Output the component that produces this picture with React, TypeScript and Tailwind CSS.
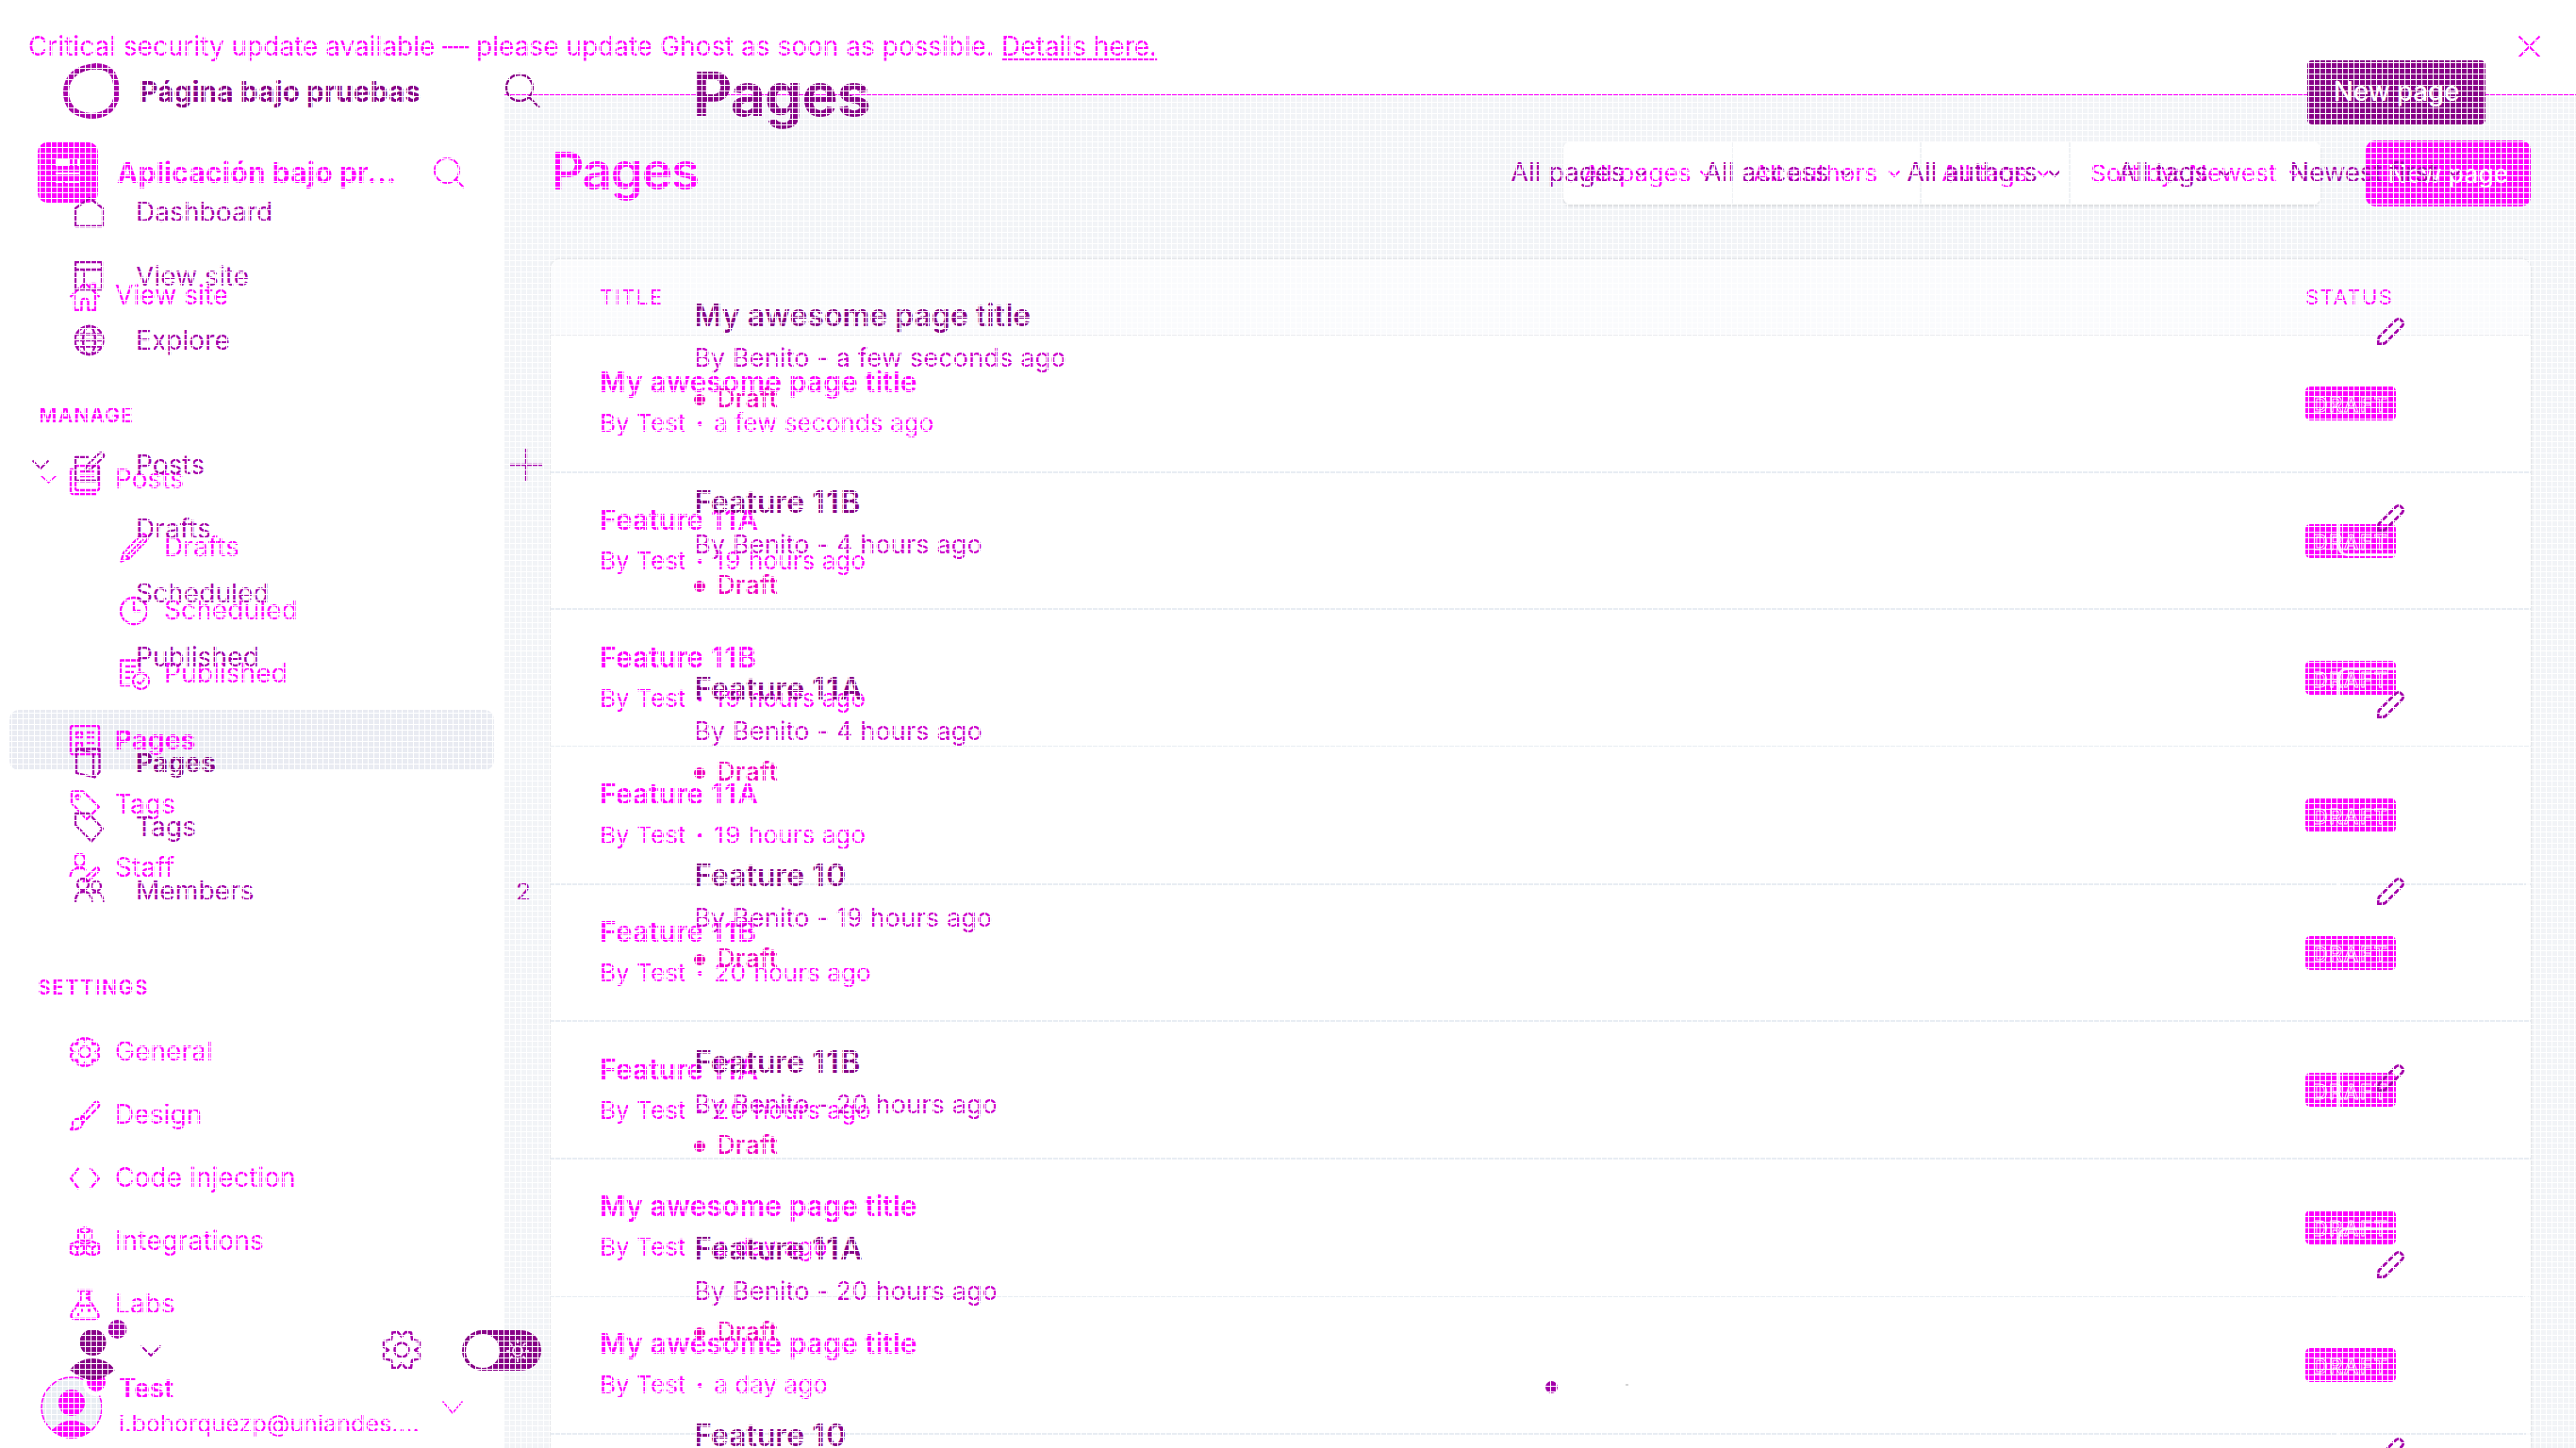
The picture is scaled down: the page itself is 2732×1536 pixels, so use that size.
import React from 'react';

type IconProps = { className?: string; w?: number; h?: number; sw?: number; children: React.ReactNode };

function Icon({ className = '', w = 32, h = 32, sw = 2, children }: IconProps) {
  return (
    <svg
      width={w}
      height={h}
      viewBox={`0 0 ${w} ${h}`}
      fill="none"
      stroke="currentColor"
      strokeWidth={sw}
      strokeLinejoin="round"
      className={`shrink-0 overflow-visible ${className}`}
    >
      {children}
    </svg>
  );
}

function Chevron({ w = 18, h = 9, sw = 2, className = '' }: { w?: number; h?: number; sw?: number; className?: string }) {
  return (
    <Icon w={w} h={h} sw={sw} className={className}>
      <path d={`M0.5 0.5 L${w / 2} ${h - 1} L${w - 0.5} 0.5`} />
    </Icon>
  );
}

/* Spaces digits and shrinks separator bullets inside a label. */
function Label({ text }: { text: string }) {
  return (
    <span className="whitespace-pre">
      {text.split(/(\d+|•)/).map((part, i) =>
        part === '•' ? (
          <span key={i} className="inline-block scale-60">•</span>
        ) : /^\d+$/.test(part) ? (
          <span key={i} className="tracking-[1.4px]">{part}</span>
        ) : (
          part
        ),
      )}
    </span>
  );
}

const search = (
  <>
    <circle cx="14" cy="14" r="13" />
    <path d="M23.5 23.5 L32 32" />
  </>
);

const gear = (
  <>
    <circle cx="16" cy="16" r="6" />
    <path d="M13 1.5h2l1 3.5 1-3.5h2l4.500 1.500 .5 4.500 4.500-.5 2.500 4-.5 3-3.500 2 3.500 2 .5 3-2.500 4-4.500-.5-.5 4.500-4.500 1.500h-2l-1-3.500-1 3.500h-2l-4.500-1.500-.5-4.500-4.500.5-2.500-4 .5-3 3.500-2-3.500-2-.5-3 2.500-4 4.500.5.5-4.500z" />
  </>
);

const house = <path d="M0.500 17 L16 2 L31.500 17 M5 13.500 V31 H12.500 V22 q0-3 3.500-3 t3.500 3 V31 H27 V13.500 M22 7 V3 h5 v8" />;
const postsIcon = (
  <>
    <rect x="6" y="1" width="25" height="26" rx="2" />
    <path d="M6 5 H1 V28 q0 3 3 3 H28 M11 7 H26 M11 12 H26 M11 17 H26" />
  </>
);
const pencilFat = <path d="M1.500 30.500 L4 21.500 L22 3 q3-3 6 0 t0 6 L10 27.500 Z M4 21.500 L10 27.500 M8 24 L25 7" />;
const clock = (
  <>
    <circle cx="15" cy="16" r="14" />
    <path d="M15 6 V16 H22" />
  </>
);
const publishedIcon = (
  <>
    <path d="M11 28 H1 V1.500 H21 V13 M6 8 H17 M6 14 H15 M6 20 H12" />
    <circle cx="22.500" cy="23.500" r="8.500" />
    <path d="M18.500 24 L21.500 27 L26.500 20.500" />
  </>
);
const pagesIcon = (
  <>
    <rect x="1" y="1" width="30" height="30" rx="2" />
    <path d="M7 8 H13 V13 H7 Z M7 19 H13 V25 H7 Z M18 8 H26 M18 13 H26 M18 19 H26 M18 25 H26" />
  </>
);
const tagIcon = (
  <>
    <path d="M2 3 q0-1.500 1.500-1.500 H14 L31 18 L18 31 L2 14 Z" />
    <circle cx="8.500" cy="7.500" r="2" />
  </>
);
const staffIcon = (
  <>
    <path d="M10.500 1 q5.500 0 5.500 6 t-5.500 7 q-5.500-1-5.500-7 t5.500-6z M0.500 25 q0-7 8-9.500 M8 13 v3 h5 v-3 M13 15.500 q3 1 4 3" />
    <path d="M14.500 31 L17 25.500 L28 15.500 q3-1 3 3 L20 29.500 Z" />
  </>
);
const brush = <path d="M1 31 q3-2 2-7 q2-5 7-4 t3 7 q-4 5-12 4z M11 20 L26 3 q3-2.500 4.500 0 t-.5 4.500 L14 24 M12 16 L17.500 20" />;
const codeIcon = <path d="M9.500 5 L1 16 L9.500 27 M21.500 5 L31 16 L21.500 27" />;
const cubes = (
  <path d="M16 1 L23 4 V13 L16 16 L9 13 V4Z M9 4 L16 7.500 L23 4 M16 7.500V16 M8 16 L15 19 V28 L8 31 L1 28 V19Z M1 19 L8 22.500 L15 19 M8 22.500V31 M24 16 L31 19 V28 L24 31 L17 28 V19Z M17 19 L24 22.500 L31 19 M24 22.500V31" />
);
const flask = (
  <>
    <path d="M8 1 H24 M11.500 1 V11 L2 25 q-2 6 3 6 H27 q5 0 3-6 L20.500 11 V1 M7.500 17 H24.500 M16 5 h4 M16 9h4" />
    <path d="M12 22 h2 M19 22h3 M8 26.500h2" strokeWidth="3" />
  </>
);
const homePlain = <path d="M1 31 V12 L16 1 L30 12 V31 Z" />;
const layoutIcon = <path d="M1 1 H29 V30 H1 Z M1 9 H29 M10.500 9 V30" />;
const globe = (
  <>
    <circle cx="15.500" cy="16" r="15" />
    <ellipse cx="15.500" cy="16" rx="6.500" ry="15" />
    <path d="M0.500 16 H30.500 M2.500 9.500 H28.500 M2.500 22.500 H28.500" />
  </>
);
const editIcon = <path d="M15 6 H1 V31 H25.500 V16 M11 21 L13 15 L26 2 q3-2 4.500 .5 t-.5 4 L17 19 Z" />;
const booklet = <path d="M2 1.500 H26.500 V26 L21.500 31.500 L2 27 Z M2 1.500 L20 6 V31" />;
const tagPlain = <path d="M1 2 H15 L30 18 L18 31.500 L1 14 Z" />;
const members = (
  <>
    <circle cx="9" cy="9" r="6" />
    <circle cx="23" cy="11" r="5" />
    <path d="M1 28 q0-11 8.500-11 t9 11 M19 18 q11-3 11.500 10" />
  </>
);
const pencil = <path d="M1.500 28.500 L3 20.500 L21 2.500 q3-2.500 6 .5 t.5 6 L9.500 27 Z" />;

/* ---------- base layer ---------- */

function NavItem({ icon, label, nested, bold }: { icon: React.ReactNode; label: string; nested?: boolean; bold?: boolean }) {
  return (
    <div className={`flex h-[67px] items-center ${nested ? 'pl-[127px]' : 'pl-[74px]'}`}>
      <Icon sw={2.300}>{icon}</Icon>
      <span className={`pt-[1px] text-[28px] tracking-[0.100px] ${nested ? 'ml-[15px]' : 'ml-[16px]'} ${bold ? 'font-semibold' : ''}`}>{label}</span>
    </div>
  );
}

function BaseSidebar() {
  return (
    <aside className="flex w-[535px] shrink-0 flex-col bg-white">
      <div className="mt-[51px] flex h-[63px] items-center pl-[40px]">
        <div className="flex size-[64px] items-center justify-center rounded-[10px] bg-[#ff00ff]">
          <svg width="28" height="28" viewBox="0 0 28 28" fill="white" className="shrink-0">
            <rect x="1" y="0" width="15" height="7" />
            <rect x="19" y="0" width="2" height="7" />
            <rect x="24" y="0" width="2" height="7" />
            <rect x="1" y="14" width="26" height="2" />
            <rect x="1" y="23" width="7" height="2" />
            <rect x="11" y="23" width="16" height="2" />
          </svg>
        </div>
        <span className="ml-[20px] w-[320px] pt-[1px] text-[30px] font-bold tracking-[0.180px]">Aplicación bajo pr...</span>
        <Icon className="ml-[16px]">{search}</Icon>
      </div>

      <div className="mt-[66px]"><NavItem icon={house} label="View site" /></div>

      <div className="mt-[77px] flex h-[34px] items-center pl-[41px] text-[21px] font-semibold tracking-[1.300px]">MANAGE</div>

      <div className="mt-[17px] flex h-[67px] items-center pl-[43px]">
        <Chevron w={17} h={9} sw={1.500} />
        <Icon className="ml-[14px]" sw={2.300}>{postsIcon}</Icon>
        <span className="ml-[16px] text-[28px]">Posts</span>
      </div>
      <div className="mt-[5px]">
        <NavItem icon={pencilFat} label="Drafts" nested />
        <NavItem icon={clock} label="Scheduled" nested />
        <NavItem icon={publishedIcon} label="Published" nested />
      </div>

      <div className="ml-[10px] mt-[5px] flex h-[64px] w-[514px] items-center rounded-[10px] bg-[#e9ebf2] pl-[64px]">
        <Icon sw={2.300}>{pagesIcon}</Icon>
        <span className="ml-[16px] pt-[2px] text-[28px] font-bold tracking-[0.300px]">Pages</span>
      </div>
      <div className="mt-[3px]">
        <NavItem icon={tagIcon} label="Tags" />
        <NavItem icon={staffIcon} label="Staff" />
      </div>

      <div className="mt-[77px] flex h-[34px] items-center pl-[40px] text-[21px] font-semibold tracking-[1.600px]">SETTINGS</div>
      <div className="mt-[17px]">
        <NavItem icon={gear} label="General" />
        <NavItem icon={brush} label="Design" />
        <NavItem icon={codeIcon} label="Code injection" />
        <NavItem icon={cubes} label="Integrations" />
        <NavItem icon={flask} label="Labs" />
      </div>

      <div className="mt-[43px] flex h-[66px] items-center pl-[43px]">
        <svg width="70" height="66" viewBox="0 0 70 66" className="shrink-0 overflow-visible">
          <circle cx="33" cy="33" r="32" fill="#e8edf3" stroke="#ff00ff" strokeWidth="1.500" />
          <circle cx="33" cy="28" r="14" fill="#ff00ff" />
          <path d="M12 57 Q33 36 54 57 Q33 75 12 57Z" fill="#ff00ff" />
          <circle cx="59" cy="7" r="14" fill="#ffffff" />
          <circle cx="59" cy="6" r="10" fill="#ff00ff" />
        </svg>
        <div className="ml-[13px] w-[320px] pb-[2px]">
          <div className="flex h-[36px] items-center text-[28px] font-semibold">Test</div>
          <div className="flex h-[36px] items-center text-[25px] tracking-[0.100px]">i.bohorquezp@uniandes....</div>
        </div>
        <Chevron w={22} h={14} sw={1.500} className="ml-[23px]" />
      </div>
    </aside>
  );
}

const filters = [
  { label: 'All pages', cls: 'w-[180px]' },
  { label: 'All authors', cls: 'w-[200px]' },
  { label: 'All tags', cls: 'w-[158px]' },
  { label: 'Sort by: Newest', cls: 'w-[265px]' },
];

const baseRows = [
  ['My awesome page title', 'By Test • a few seconds ago'],
  ['Feature 11A', 'By Test • 19 hours ago'],
  ['Feature 11B', 'By Test • 19 hours ago'],
  ['Feature 11A', 'By Test • 19 hours ago'],
  ['Feature 11B', 'By Test • 20 hours ago'],
  ['Feature 11A', 'By Test • 20 hours ago'],
  ['My awesome page title', 'By Test • a day ago'],
  ['My awesome page title', 'By Test • a day ago'],
];

function BaseLayer() {
  return (
    <div className="flex h-[1536px] w-[2732px] flex-col overflow-hidden bg-white text-[#ff00ff]">
      <div className="flex h-[100px] shrink-0 items-center pb-[1px] pl-[30px] pr-[38px]">
        <p className="whitespace-pre text-[28px]">
          Critical security update available — please update Ghost as soon as possible.{' '}
          <span className="underline decoration-2 underline-offset-[3px]">Details here.</span>
        </p>
        <Icon w={23} h={23} className="ml-auto">
          <path d="M0.500 0.500 L22.500 22.500 M22.500 0.500 L0.500 22.500" />
        </Icon>
      </div>
      <div className="flex min-h-0 flex-1">
        <BaseSidebar />
        <main className="flex flex-1 flex-col border-t border-[#ff00ff] bg-[#f2f4f7] pl-[49px] pr-[48px]">
          <header className="mt-[48px] flex h-[70px] shrink-0 items-center">
            <h1 className="-mt-[5px] text-[55px] font-semibold leading-none tracking-[-1.400px]">Pages</h1>
            <div className="-mt-[1px] ml-auto flex h-[67px] rounded-[8px] bg-white shadow-[0_2px_3px_rgba(0,0,0,0.1)]">
              {filters.map((f, i) => (
                <div key={f.label} className={`flex items-center justify-between pl-[21px] pr-[21px] ${f.cls} ${i < 3 ? 'border-r-2 border-[#f0f2f5]' : ''}`}>
                  <span className="whitespace-nowrap pt-[1px] text-[26px] tracking-[0.130px]">{f.label}</span>
                  <Chevron w={12} h={7} className="mt-[2px]" />
                </div>
              ))}
            </div>
            <div className="ml-[48px] flex h-[70px] w-[175px] items-center justify-center rounded-[10px] bg-[#ff00ff] pt-[2px] text-[26px] font-medium tracking-[0.300px] text-white">
              New page
            </div>
          </header>
          <section className="mt-[56px] flex-1 rounded-t-[10px] bg-white shadow-[0_0_3px_rgba(0,0,0,0.15)]">
            <div className="flex h-[81px] items-center justify-between rounded-t-[10px] border-b border-[#e8eaee] bg-[#fafbfd] pl-[52px] text-[22px] tracking-[1.500px]">
              <span>TITLE</span>
              <span className="w-[239px]">STATUS</span>
            </div>
            {baseRows.map(([title, meta], i) => (
              <div key={i} className="flex h-[145.700px] items-center justify-between border-b-2 border-[#e8edf3] pl-[52px]">
                <div>
                  <div className="flex h-[42px] items-center pb-[3px] text-[30px] font-semibold tracking-[0.080px]"><Label text={title} /></div>
                  <div className="flex h-[42px] items-center text-[26px] tracking-[0.080px]"><Label text={meta} /></div>
                </div>
                <div className="w-[239px]">
                  <div className="flex h-[36px] w-[96px] items-center justify-center rounded-[5px] bg-[#ff00ff] pt-[3px] text-[22px] font-medium tracking-[1.500px] [-webkit-text-stroke:0.8px_white]">
                    DRAFT
                  </div>
                </div>
              </div>
            ))}
          </section>
        </main>
      </div>
    </div>
  );
}

/* ---------- top layer ---------- */

function TopItem({ icon, label, tail, bold }: { icon?: React.ReactNode; label: string; tail?: React.ReactNode; bold?: boolean }) {
  return (
    <div className="flex h-[68px] items-center pl-[79px]">
      <div className="w-[32px]">{icon && <Icon sw={2.300}>{icon}</Icon>}</div>
      <span className={`ml-[33px] w-[396px] pt-[2px] text-[28px] ${bold ? 'font-bold tracking-[0.200px] text-[#880088]' : 'tracking-[0.080px]'}`}>{label}</span>
      {tail}
    </div>
  );
}

function TopSidebar() {
  return (
    <aside className="flex w-[640px] shrink-0 flex-col">
      <div className="mt-[64px] flex h-[64px] items-center pl-[66px] text-[#880088]">
        <Icon w={59} h={59}>
          <path d="M36 3 Q48 3 54 12 Q59 22 57 38 Q52 56 30 56 Q4 54 4 30 Q5 6 36 3Z" strokeWidth="6" stroke="#aa00aa" />
          <path d="M12 14 Q24 1 50 8" strokeWidth="2" />
        </Icon>
        <span className="ml-[23px] w-[388px] pt-[1px] text-[30px] font-bold">Página bajo pruebas</span>
        <Icon w={36} h={36} sw={2.300}>
          <circle cx="15" cy="15" r="14" />
          <path d="M25 25 L36 36" />
        </Icon>
      </div>

      <div className="mt-[63px]">
        <TopItem icon={homePlain} label="Dashboard" />
        <TopItem icon={layoutIcon} label="View site" />
        <TopItem icon={globe} label="Explore" />
      </div>

      <div className="mt-[64px]">
        <div className="flex h-[68px] items-center pl-[34px]">
          <Chevron w={18} h={10} sw={1.800} />
          <Icon sw={2.300} className="ml-[27px] mt-[3px]">{editIcon}</Icon>
          <span className="ml-[33px] w-[397px] pt-[2px] text-[28px]">Posts</span>
          <Icon w={34} h={34} sw={2.300}>
            <path d="M17 0 V34 M0 17 H34" />
          </Icon>
        </div>
        <TopItem label="Drafts" />
        <TopItem label="Scheduled" />
        <TopItem label="Published" />
      </div>

      <div className="mt-[44px]">
        <TopItem icon={booklet} label="Pages" bold />
        <TopItem icon={tagPlain} label="Tags" />
        <TopItem icon={members} label="Members" tail={<span className="ml-[7px] pt-[1px] text-[26px]">2</span>} />
      </div>

      <div className="mt-[421px] flex h-[66px] items-start pl-[74px]">
        <svg width="60" height="66" viewBox="0 0 60 66" className="shrink-0 overflow-visible" fill="#880088">
          <circle cx="24.500" cy="24" r="14" />
          <path d="M0 53 Q10 41 24 41 Q39 41 48 53 Q35 64 24 64 Q13 64 0 53Z" />
          <circle cx="50.500" cy="10" r="10" fill="#a400aa" />
        </svg>
        <Chevron w={22} h={12} className="ml-[15px] mt-[27px]" />
        <Icon w={40} h={40} sw={2.500} className="ml-[235px] mt-[12px]">
          <circle cx="20" cy="20" r="7.500" />
          <path d="M10 1.500 L16 1 L20 6 L24 1 L30 1.500 L31 9 L39 11 L39 17 L34 20 L39 24 L39 29 L31 31 L30 39 L24 39 L20 34 L16 39 L10 39 L9 31 L1 29 L1 24 L6 20 L1 17 L1 11 L9 9 Z" />
        </Icon>
        <div className="ml-[44px] mt-[11px] flex h-[43px] w-[84px] items-center rounded-full bg-[#880088] pl-[4px]">
          <div className="size-[36px] rounded-full bg-white" />
          <svg width="24" height="24" viewBox="0 0 24 24" className="ml-[7px]" fill="none" stroke="#f0c8f0" strokeWidth="2">
            <circle cx="12" cy="12" r="5" />
            <path d="M12 0V4 M12 20V24 M0 12H4 M20 12H24 M3.500 3.500L6.500 6.500 M17.500 17.500L20.500 20.500 M3.500 20.500L6.500 17.500 M17.500 6.500L20.500 3.500" />
          </svg>
        </div>
      </div>
    </aside>
  );
}

const topFilters = [
  { label: 'All pages', cls: 'w-[205px]', gap: 'ml-[12px]' },
  { label: 'All access', cls: 'w-[215px]', gap: 'ml-[13px]' },
  { label: 'All authors', cls: 'w-[224px]', gap: 'ml-[12px]' },
  { label: 'All tags', cls: 'w-[182px]', gap: 'ml-[12px]' },
  { label: 'Newest first', cls: 'w-[208px]', gap: 'ml-[12px]' },
];

const topRows = [
  ['My awesome page title', 'By Benito - a few seconds ago'],
  ['Feature 11B', 'By Benito - 4 hours ago'],
  ['Feature 11A', 'By Benito - 4 hours ago'],
  ['Feature 10', 'By Benito - 19 hours ago'],
  ['Feature 11B', 'By Benito - 20 hours ago'],
  ['Feature 11A', 'By Benito - 20 hours ago'],
  ['Feature 10', ''],
];

function TopLayer() {
  return (
    <div className="absolute inset-0 flex overflow-hidden text-[#a400aa]">
      <TopSidebar />
      <main className="flex flex-1 flex-col pl-[96px] pr-[96px]">
        <header className="mt-[64px] flex h-[68px] shrink-0 items-center justify-between">
          <h1 className="pt-[4px] text-[64px] font-bold leading-none tracking-[-0.900px] text-[#880088]">
            <span className="-ml-[1px]">Pages</span>
          </h1>
          <div className="flex h-[68px] w-[189px] items-center justify-center rounded-[5px] bg-[#880088] text-[28px] font-medium tracking-[-0.200px] text-white">
            New page
          </div>
        </header>
        <div className="mt-[28px] flex h-[48px] shrink-0 items-center justify-end">
          {topFilters.map((f) => (
            <div key={f.label} className={`flex items-center whitespace-nowrap ${f.cls}`}>
              <span className="text-[28px] tracking-[-0.200px]">{f.label}</span>
              <Chevron w={12} h={7} className={f.gap} />
            </div>
          ))}
        </div>
        <div className="mt-[96px]">
          {topRows.map(([title, meta], i) => (
            <div key={i} className="flex h-[198px] items-start justify-between">
              <div className="pt-[8px]">
                <div className="flex h-[47px] items-center text-[32px] font-semibold text-[#880088]"><Label text={title} /></div>
                <div className="flex h-[43px] items-center text-[27px] tracking-[0.180px] text-[#cc00cc]">{meta}</div>
                {meta && (
                  <div className="flex h-[43px] items-center text-[#f000c0]">
                    <span className="size-[12px] rounded-full bg-[#f000c0]" />
                    <span className="ml-[12px] text-[27px] font-medium tracking-[0.300px]">Draft</span>
                  </div>
                )}
              </div>
              <div
                className={`-mr-[46px] mt-[8px] flex h-[80px] w-[203px] items-center rounded-[10px] border-[3px] pl-[38px] ${
                  i === 0 ? 'border-transparent' : 'border-white/85'
                }`}
              >
                <Icon w={30} h={30} sw={2.800}>{pencil}</Icon>
              </div>
            </div>
          ))}
        </div>
      </main>
    </div>
  );
}

export default function App() {
  return (
    <div className="relative h-[1536px] w-[2732px] overflow-hidden bg-white font-['Inter',sans-serif] leading-[1.2]">
      <BaseLayer />
      <TopLayer />
      <div className="absolute left-[1639px] top-[1465px] size-[13px] rounded-full bg-[#a400aa]" />
      <div className="absolute left-[1724px] top-[1468px] h-[2px] w-[3px] bg-[#d4d4d4]" />
      {/* one-pixel white mesh repeated every six pixels */}
      <div className="pointer-events-none absolute inset-0 bg-[linear-gradient(to_right,white_1px,transparent_1px),linear-gradient(to_bottom,white_1px,transparent_1px)] bg-[size:6px_6px]" />
    </div>
  );
}
